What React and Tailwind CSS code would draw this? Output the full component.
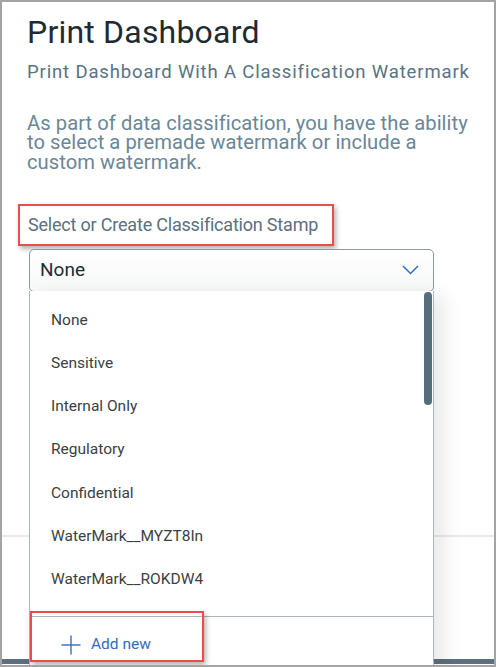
import React from "react";

const items = [
  "None",
  "Sensitive",
  "Internal Only",
  "Regulatory",
  "Confidential",
  "WaterMark__MYZT8In",
  "WaterMark__ROKDW4",
];

export default function App() {
  return (
    <div
      className="relative w-[496px] h-[667px] overflow-hidden bg-white border-2 border-[#a3a3a3]"
      style={{ fontFamily: "Roboto, 'Liberation Sans', sans-serif" }}
    >
      <div className="flex flex-col h-full">
        <div className="pl-[25px] pr-3 pt-[10px]">
          <h1 className="text-[32px] leading-[40px] text-[#1f2a33] font-normal tracking-[0.2px]">Print Dashboard</h1>
          <p className="mt-[9px] text-[18.5px] leading-[22px] text-[#5a7282] tracking-[0.85px]">
            Print Dashboard With A Classification Watermark
          </p>
          <p className="mt-[31px] text-[20.2px] leading-[19.3px] tracking-[0.05px] text-[#6a8797] w-[452px]">
            As part of data classification, you have the ability to select a premade watermark or include a custom
            watermark.
          </p>
        </div>

        <div className="mt-[32px] ml-[16px] w-[316px] h-[42px] border-2 border-[#f04a4a] shadow-[2px_3px_5px_rgba(0,0,0,0.3)] flex items-center pl-[8px]">
          <span className="text-[18px] tracking-[-0.2px] text-[#5b7080]">Select or Create Classification Stamp</span>
        </div>

        <div className="relative ml-[27px] w-[405px]">
          <div className="mt-[3px] h-[43px] border border-[#8a99a3] rounded-[5px] bg-gradient-to-b from-white to-[#f7f8f8] flex items-center justify-between pl-[10px] pr-[14px]">
            <span className="text-[19px] text-[#1f2a33]">None</span>
            <svg width="17" height="10" viewBox="0 0 17 10" fill="none">
              <polyline points="1,1 8.5,8.5 16,1" stroke="#2f6fc4" strokeWidth="1.5" />
            </svg>
          </div>

          <div className="absolute left-0 top-[45px] w-[405px] h-[380px] bg-white border-x border-[#a9b7be] shadow-[10px_4px_18px_rgba(0,0,0,0.09)] z-10 flex flex-col">
            <div className="relative h-[331px] overflow-hidden pt-[8px]">
              {items.map((t) => (
                <div key={t} className="h-[43.2px] flex items-center pl-[21px] text-[15.5px] text-[#3a3f44]">
                  {t}
                </div>
              ))}
              <div className="absolute right-[1px] top-[1px] w-[8px] h-[113px] rounded-full bg-[#566d7b]" />
            </div>
            <div className="border-t border-[#a9b7be] h-[56px] pt-[2px] flex items-center pl-[31px] gap-[10px]">
              <svg width="20" height="20" viewBox="0 0 20 20" fill="none">
                <line x1="10" y1="0.5" x2="10" y2="19.5" stroke="#2f6fc4" strokeWidth="1.4" />
                <line x1="0.5" y1="10" x2="19.5" y2="10" stroke="#2f6fc4" strokeWidth="1.4" />
              </svg>
              <span className="text-[15.5px] text-[#2f6bc4]">Add new</span>
            </div>
          </div>
        </div>

        <div className="mt-[243px] h-[2px] bg-[#e7ebec]" />
        <div className="flex-1" />
        <div className="h-[5px] bg-[#5c6f7c] mb-[1px]" />
      </div>

      <div className="absolute left-[28px] top-[609px] w-[174px] h-[51px] border-2 border-[#f04a4a] shadow-[2px_3px_5px_rgba(0,0,0,0.3)] z-20" />
    </div>
  );
}
